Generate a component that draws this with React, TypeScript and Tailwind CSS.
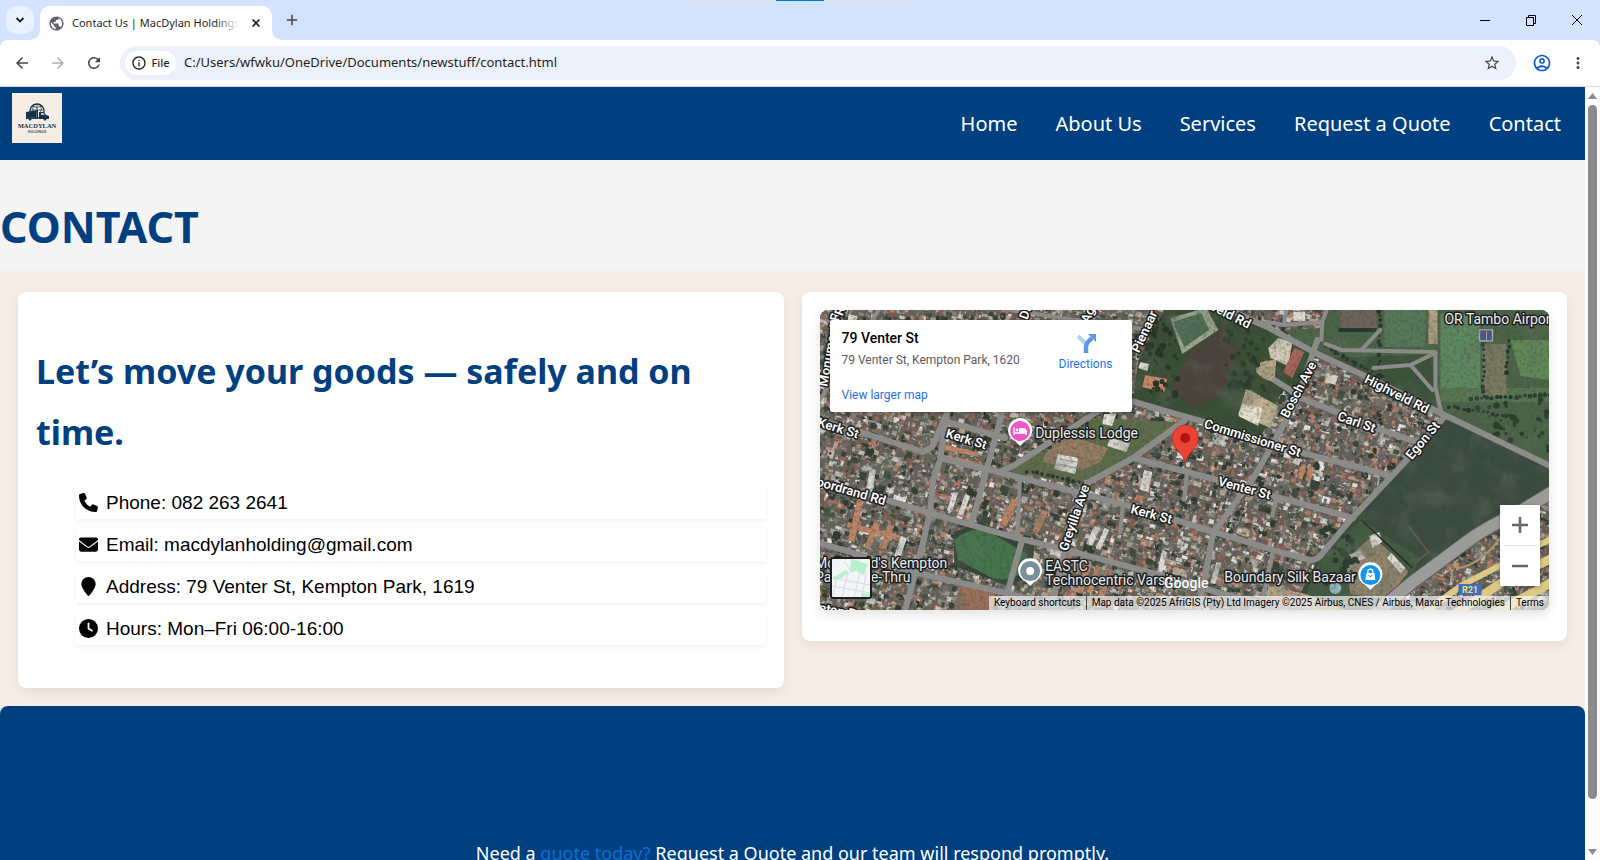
import type { ReactNode } from "react";
import { FaPhone, FaEnvelope, FaLocationPin, FaClock } from "react-icons/fa6";
import {
  MdArrowBack,
  MdArrowForward,
  MdRefresh,
  MdInfoOutline,
  MdStarBorder,
  MdOutlineAccountCircle,
  MdMoreVert,
  MdPublic,
  MdAdd,
  MdKeyboardArrowDown,
} from "react-icons/md";

const navLinks = ["Home", "About Us", "Services", "Request a Quote", "Contact"];

const contactRows: { icon: ReactNode; text: string }[] = [
  { icon: <FaPhone />, text: "Phone: 082 263 2641" },
  { icon: <FaEnvelope />, text: "Email: macdylanholding@gmail.com" },
  { icon: <FaLocationPin />, text: "Address: 79 Venter St, Kempton Park, 1619" },
  { icon: <FaClock />, text: "Hours: Mon–Fri 06:00-16:00" },
];

/* Seeded generator so that the aerial texture is the same on every load. */
function makeRandom(seed: number) {
  let s = seed;
  return () => {
    s = (s * 1664525 + 1013904223) % 4294967296;
    return s / 4294967296;
  };
}

const roofColors = [
  "#a06a5c", "#b87a64", "#8a5c52", "#c08f78", "#a5a29e", "#c9c5bf", "#e6e3de",
  "#8b857f", "#6b6660", "#454a44", "#323b32", "#3c4837", "#b5a692", "#7b7069",
];

function buildRoofs() {
  const rnd = makeRandom(77);
  const paths = roofColors.map(() => "");
  const a = (16 * Math.PI) / 180;
  const c = Math.cos(a);
  const s = Math.sin(a);
  for (let v = -220; v < 320; v += 5) {
    for (let u = -20; u < 840; u += 6) {
      const du = u + rnd() * 5;
      const dv = v + rnd() * 5;
      const x = du * c - dv * s;
      const y = du * s + dv * c;
      const big = rnd() > 0.88 ? 2 : 1;
      const w = (1.5 + rnd() * 5) * big;
      const h = 1.5 + rnd() * 4 * big;
      const k = Math.floor(rnd() * roofColors.length);
      if (x < -8 || x > 735 || y < -8 || y > 305) continue;
      paths[k] +=
        `M${x.toFixed(1)} ${y.toFixed(1)}l${(w * c).toFixed(1)} ${(w * s).toFixed(1)}` +
        `l${(-h * s).toFixed(1)} ${(h * c).toFixed(1)}l${(-w * c).toFixed(1)} ${(-w * s).toFixed(1)}z`;
    }
  }
  return paths;
}

function dot(x: number, y: number, r: number) {
  return `M${(x - r).toFixed(1)} ${y.toFixed(1)}a${r.toFixed(1)} ${r.toFixed(1)} 0 1 0 ${(2 * r).toFixed(1)} 0a${r.toFixed(1)} ${r.toFixed(1)} 0 1 0 ${(-2 * r).toFixed(1)} 0`;
}

/* Trees scattered in clumps over an area. */
function buildTrees(x0: number, y0: number, w: number, h: number, n: number, seed: number) {
  const rnd = makeRandom(seed);
  let d = "";
  for (let i = 0; i < n; i++) {
    const x = x0 + rnd() * w;
    const y = y0 + rnd() * h;
    d += dot(x, y, 1 + rnd() * 2.5);
    if (rnd() > 0.5) d += dot(x + rnd() * 5, y + rnd() * 4, 1 + rnd() * 2.5);
  }
  return d;
}

/* Evenly spaced trees along a line. */
function treeLine(x1: number, y1: number, x2: number, y2: number, seed: number) {
  const rnd = makeRandom(seed);
  const n = Math.round(Math.hypot(x2 - x1, y2 - y1) / 5);
  let d = "";
  for (let i = 0; i <= n; i++) {
    d += dot(x1 + ((x2 - x1) * i) / n + rnd() * 2, y1 + ((y2 - y1) * i) / n + rnd() * 2, 1.2 + rnd() * 1.3);
  }
  return d;
}

const roofPaths = buildRoofs();
const townTrees = buildTrees(0, 0, 729, 300, 480, 5);

const mainRoads = [
  "M300 88L313 92L377 110L483 143L567 165",
  "M404 -2L447 17L493 42L547 67L620 103L732 157",
  "M0 110L43 123L103 142L112 137L127 103",
  "M127 103L120 150L113 170L110 203L97 257L85 300",
  "M127 112L185 128",
  "M183 98L167 158L152 212",
  "M120 148L170 160L260 183L313 197L395 222L453 240L490 250Q498 250 503 242L530 210L580 157L623 108",
  "M0 172L67 190L110 203L197 228L247 240L333 263L400 283L460 302",
  "M0 233L47 247L97 263L187 283L250 302",
  "M202 230L187 283L182 300",
  "M183 160L193 156L275 103L300 90",
  "M365 110L313 148L267 173L257 207L245 240L230 300",
  "M313 148L367 162L397 170L457 187L533 208",
  "M497 30L477 90L435 165L393 223L378 300",
  "M454 70L470 80L481 88L556 118L596 132",
];

const sideRoads = [
  "M367 162L364 190",
  "M456 187L452 206",
  "M453 240L440 300",
  "M303 193L300 222",
  "M200 168L197 226",
  "M380 277L440 292L530 310",
  "M505 34L521 40L615 42L615 77L621 103",
  "M463 15L502 12L501 30M507 -2L502 12",
  "M553 58L590 55L615 43M590 55L612 80",
  "M541 40L560 20",
  "M467 -2L463 15L447 12",
  "M180 -2L240 8L330 20",
  "M60 -2L0 90",
];

const streetLabels: { t: string; x: number; y: number; r: number }[] = [
  { t: "Kerk St", x: 18, y: 119, r: 17 },
  { t: "Kerk St", x: 146, y: 130, r: 17 },
  { t: "oordrand Rd", x: 31, y: 182, r: 16 },
  { t: "Monument Rd", x: 11, y: 36, r: -80 },
  { t: "Pienaar", x: 325, y: 22, r: -65 },
  { t: "Highveld Rd", x: 398, y: 0, r: 27 },
  { t: "Highveld Rd", x: 576, y: 85, r: 27 },
  { t: "Bosch Ave", x: 479, y: 80, r: -62 },
  { t: "Carl St", x: 536, y: 113, r: 19 },
  { t: "Egon St", x: 603, y: 131, r: -50 },
  { t: "Commissioner St", x: 432, y: 129, r: 17 },
  { t: "Venter St", x: 424, y: 179, r: 15 },
  { t: "Kerk St", x: 331, y: 205, r: 15 },
  { t: "Greyilla Ave", x: 255, y: 208, r: -71 },
  { t: "Kempton Rd", x: 8, y: 300, r: 10 },
  { t: "Dann", x: 209, y: -5, r: -70 },
  { t: "Aga", x: 270, y: 2, r: -65 },
  { t: "Rd", x: 22, y: -2, r: -70 },
];

function SatelliteMap() {
  return (
    <svg
      viewBox="0 0 729 300"
      preserveAspectRatio="xMidYMid slice"
      className="block h-full w-full"
      role="img"
      aria-label="Satellite map of Kempton Park"
    >
      <defs>
        <filter id="grain" x="0" y="0" width="100%" height="100%">
          <feTurbulence type="fractalNoise" baseFrequency="0.3" numOctaves="3" seed="4" />
          <feColorMatrix values="0 0 0 0 0.05  0 0 0 0 0.07  0 0 0 0 0.05  2.2 0 0 0 -1" />
        </filter>
        <filter id="glint" x="0" y="0" width="100%" height="100%">
          <feTurbulence type="fractalNoise" baseFrequency="0.22" numOctaves="3" seed="21" />
          <feColorMatrix values="0 0 0 0 0.9  0 0 0 0 0.87  0 0 0 0 0.82  0 3.4 0 0 -1.95" />
        </filter>
        <filter id="patch" x="0" y="0" width="100%" height="100%">
          <feTurbulence type="fractalNoise" baseFrequency="0.04" numOctaves="3" seed="9" />
          <feColorMatrix values="0 0 0 0 0.12  0 0 0 0 0.16  0 0 0 0 0.12  0 3 0 0 -1.4" />
        </filter>
      </defs>

      <rect width="729" height="300" fill="#67615a" />
      {roofPaths.map((d, i) => (
        <path key={i} d={d} fill={roofColors[i]} />
      ))}
      <path d={townTrees} fill="#2e3930" />
      <rect width="729" height="300" filter="url(#glint)" opacity="0.75" />

      {/* open ground */}
      <path d="M313 88L318 50L345 -2H404L447 17L493 42L478 88L462 80L440 128L377 108Z" fill="#3a4d35" />
      <path d="M350 78L372 40L404 18L418 42L402 84L372 98Z" fill="#4c433c" />
      <path d="M350 8L386 -2L398 20L362 44Z" fill="#9aa48e" />
      <path d="M353 12L381 3L389 20L364 37Z" fill="#4c6f55" />
      <path d="M325 65L347 69L344 82L322 77Z" fill="#d08c69" />
      <path d="M320 52L329 54L327 61L318 58Z" fill="#d7d3cc" />
      <path d="M436 58Q438 50 456 50L454 72Q442 70 436 62Z" fill="#c0aa8b" />
      <path d="M448 38L458 28L472 32L468 56L450 48Z" fill="#d4c9b8" />
      <path d="M474 38L484 42L472 68L463 62Z" fill="#b0635a" />
      <path d="M426 78L458 96L450 118L418 104Z" fill="#c2b193" />
      <path d="M422 94L442 98L438 116L418 106Z" fill="#e6dfd0" />
      <path d="M507 -2H732V155L620 103L547 67L493 42L463 20L502 18Z" fill="#4b6447" />
      <path d="M505 48L615 44V98L560 70Z" fill="#3c523a" />
      <rect x="520" y="0" width="36" height="20" fill="#6f625a" />
      <path d="M518 18H556V22H518Z" fill="#28352a" />
      <rect x="564" y="0" width="41" height="37" fill="#56795a" />
      <rect x="608" y="0" width="9" height="34" fill="#c3ad8b" />
      <rect x="620" y="4" width="40" height="74" fill="#5d8860" />
      <rect x="620" y="78" width="109" height="14" fill="#567850" />
      <rect x="662" y="34" width="24" height="52" fill="#7a7860" />
      <path d="M690 30H729V70L700 66Z" fill="#618956" />
      <rect x="659" y="20" width="13" height="11" fill="#42548f" stroke="#b9b9c4" strokeWidth="1.5" />
      <path d="M666 20V31" stroke="#b9b9c4" strokeWidth="1" />
      <rect x="473" y="2" width="12" height="9" fill="#dedbd4" />
      <path d={treeLine(662, 34, 662, 86, 1)} fill="#24332a" />
      <path d={treeLine(688, 30, 684, 62, 2)} fill="#24332a" />
      <path d={treeLine(650, 88, 729, 84, 3)} fill="#24332a" />
      <path d={treeLine(628, 96, 690, 106, 4)} fill="#24332a" />
      <path d={treeLine(558, 0, 558, 64, 6)} fill="#24332a" />
      <path d={treeLine(505, 36, 560, 66, 8)} fill="#24332a" />
      <path d={buildTrees(650, 88, 79, 50, 30, 12)} fill="#2b3d2c" />
      <path d={buildTrees(326, 4, 30, 90, 30, 15)} fill="#263526" />
      <path d={buildTrees(404, 20, 40, 60, 30, 16)} fill="#2b3b2a" />

      <path d="M623 108L732 159V180L652 226L596 268L560 302H470L497 250L530 210L580 157Z" fill="#3b4c3f" />
      <path d="M541 210L600 248L575 300H480L500 248Z" fill="#435a40" />
      <path d="M525 250L552 226L578 250L588 262L566 290L530 284Z" fill="#93846f" />
      <path d="M549 226L559 222L562 232L552 238Z" fill="#d9d6d0" />
      <path d="M571 243L585 258L580 263L567 248Z" fill="#e4e1da" />
      <path d="M526 246L540 240L545 248L530 255Z" fill="#cfc9bf" />
      <path d="M515 272a6 6 0 1 0 .1 0" fill="#8fb9bd" />
      <path d="M541 210L592 258" stroke="#1e2822" strokeWidth="1.5" />
      <path d="M588 216L608 242L596 252" stroke="#6b5e4e" strokeWidth="1.5" fill="none" />
      <path d={buildTrees(502, 214, 36, 60, 34, 20)} fill="#2a3b2e" />

      <path d="M190 160L268 108L360 112L313 147L266 170L240 172Z" fill="#5e6c4a" />
      <path d="M222 152L236 122L288 138L280 152L262 160Z" fill="#957c62" />
      <path d="M238 144L258 148L255 164L234 159Z" fill="#e1deda" />
      <path d="M240 149L256 152M239 154L255 158" stroke="#aaa59f" strokeWidth="1" />
      <path d="M284 104L296 104L292 116L282 114Z" fill="#e5e2dd" />
      <path d="M290 128L310 133L306 142L287 136Z" fill="#d8d4cd" />
      <path d={treeLine(206, 160, 262, 172, 30)} fill="#27342a" />
      <path d={treeLine(216, 142, 266, 112, 31)} fill="#27342a" />

      <path d="M134 222L160 212L214 236L211 266L188 276L134 256Z" fill="#36453a" />
      <path d="M134 230Q150 216 166 220L207 244Q208 258 199 264Q190 272 172 268L138 250Z" fill="#45754c" />
      <path d="M140 270L176 280L172 300H134Z" fill="#9a705c" />
      <path d="M448 276L486 284L524 300H444Z" fill="#b8a28a" />

      {/* long shed roofs */}
      <g fill="#c28766">
        <path d="M40 178L46 180L34 232L28 230ZM54 212L60 214L50 240L44 238ZM68 214L74 216L66 240L60 238ZM192 188L199 190L186 216L180 213ZM222 200L228 202L218 224L212 221Z" />
        <path d="M122 134L158 142V147L121 139ZM121 144L157 152V157L120 149ZM28 212L82 226L81 231L27 218ZM266 252L272 254L262 284L256 282ZM276 255L281 257L272 284L267 282ZM286 258L292 260L284 288L278 286Z" />
        <path d="M481 154L486 156L482 170L477 168ZM489 156L494 158L490 172L485 170Z" />
      </g>
      <path d="M133 182L138 183L132 202L127 200ZM145 184L150 186L143 206L138 204ZM50 158L56 160L52 182L46 180ZM274 216L280 218L272 236L266 234ZM284 218L289 220L280 240L276 238ZM342 240L347 242L340 272L335 270ZM81 226L87 228L80 248L74 246ZM396 252L401 253L395 274L390 273ZM324 160L332 162L328 182L320 180Z" fill="#dedbd6" />

      <rect width="729" height="300" filter="url(#patch)" opacity="0.4" />
      <rect width="729" height="300" filter="url(#grain)" opacity="0.5" />

      {/* roads */}
      <g fill="none" stroke="#8b8b89" strokeLinejoin="round" strokeLinecap="round">
        {mainRoads.map((d) => (
          <path key={d} d={d} strokeWidth="6" />
        ))}
        {sideRoads.map((d) => (
          <path key={d} d={d} strokeWidth="4" />
        ))}
        <path d="M552 306L592 272L650 229Q672 214 692 206L732 182" strokeWidth="14" stroke="#5d5f5c" />
        <path d="M552 306L592 272L650 229Q672 214 692 206L732 182" strokeWidth="12" stroke="#9b9b99" />
        <path d="M637 250Q630 256 638 258Q660 254 680 228" strokeWidth="2" stroke="#a99a66" />
      </g>
      <g fill="none" stroke="#dcc985">
        <path d="M596 308L640 276L732 228" strokeWidth="6" />
        <path d="M625 310L682 272L732 248" strokeWidth="9" />
        <path d="M665 308L732 272" strokeWidth="9" />
      </g>

      <g
        fontFamily="Roboto, sans-serif"
        fill="#ffffff"
        stroke="#1d1f20"
        strokeLinejoin="round"
        style={{ paintOrder: "stroke" }}
        textAnchor="middle"
      >
        {streetLabels.map((l, i) => (
          <text
            key={i}
            fontSize="13"
            fontWeight="600"
            strokeWidth="3"
            dominantBaseline="middle"
            transform={`translate(${l.x} ${l.y}) rotate(${l.r})`}
          >
            {l.t}
          </text>
        ))}
        <g fontSize="14" strokeWidth="3" fill="#e9eaea" textAnchor="start">
          <text x="215" y="128">Duplessis Lodge</text>
          <text x="624" y="14">OR Tambo Airport</text>
          <text x="225" y="261">EASTC</text>
          <text x="225" y="275">Technocentric Varsity</text>
          <text x="404" y="272">Boundary Silk Bazaar</text>
          <text x="-5" y="258">McDonald's Kempton</text>
          <text x="-5" y="272">Park Drive-Thru</text>
        </g>
        <text x="366" y="278" fontSize="14" fontWeight="500" strokeWidth="1" stroke="#6a6a6a">
          Google
        </text>
      </g>

      {/* place markers */}
      <g transform="translate(200 121)">
        <path d="M0 15L-5 10A12 12 0 1 1 5 10Z" fill="#fff" />
        <circle r="10" fill="#f553c8" />
        <path d="M-6 -4V4M-6 2H6V4M6 3V-1" stroke="#fff" strokeWidth="1.5" fill="none" />
        <circle cx="-3" cy="-1" r="1.5" fill="#fff" />
        <path d="M-1 -3H4Q6 -3 6 -1V2H-1Z" fill="#fff" />
      </g>
      <g transform="translate(210 261)">
        <path d="M0 15L-5 10A12 12 0 1 1 5 10Z" fill="#fff" />
        <circle r="10" fill="#78909c" />
        <circle r="4" fill="#fff" />
      </g>
      <g transform="translate(550 265)">
        <path d="M0 15L-5 10A12 12 0 1 1 5 10Z" fill="#fff" />
        <circle r="10" fill="#0d96f6" />
        <path d="M-4 -2H4L5 5H-5Z" fill="#fff" />
        <path d="M-2.500 -2V-3.500A2.500 2.500 0 0 1 2.500 -3.500V-2" stroke="#fff" strokeWidth="1.300" fill="none" />
        <path d="M-2 0Q0 3 2 0" stroke="#0d96f6" strokeWidth="1" fill="none" />
      </g>
      <g transform="translate(365 128)">
        <path d="M0 25C-2 14 -13 11 -13 0A13 13 0 1 1 13 0C13 11 2 14 0 25Z" fill="#ea4335" stroke="#c5221f" strokeWidth="0.700" />
        <circle r="5" fill="#b31412" />
      </g>
      <g transform="translate(638 274)">
        <rect width="23" height="11" fill="#3b6fc0" />
        <text x="11.500" y="9" fontFamily="Roboto, sans-serif" fontSize="9" fontWeight="700" fill="#f4dc6a" textAnchor="middle">
          R21
        </text>
      </g>
    </svg>
  );
}

function MapEmbed() {
  return (
    <div className="relative h-[300px] overflow-hidden rounded-lg font-['Roboto',sans-serif] shadow-[0_4px_12px_rgba(0,0,0,0.12)]">
      <SatelliteMap />

      <div className="absolute left-[10px] top-[10px] flex w-[302px] justify-between rounded-[2px] bg-white pb-[9px] pl-3 pr-[19px] pt-[10px] shadow-[0_1px_4px_rgba(0,0,0,0.3)]">
        <div className="flex flex-col">
          <p className="text-sm leading-4 font-medium text-black">79 Venter St</p>
          <p className="mt-[6px] text-xs leading-4 text-[#5b5b5b]">79 Venter St, Kempton Park, 1620</p>
          <a href="#map" className="mt-[19px] text-xs leading-4 text-[#1a73e8]">View larger map</a>
        </div>
        <a href="#directions" className="flex flex-col items-center gap-[2px] pt-[2px] text-xs leading-4 text-[#1a73e8]">
          <svg viewBox="0 0 22 22" className="h-[22px] w-[22px]" aria-hidden="true">
            <path d="M3 4L11 12" stroke="#b5d0f7" strokeWidth="4" fill="none" />
            <path d="M11 21V15Q11 12 13 10L17 6" stroke="#5e97e8" strokeWidth="4.500" fill="none" />
            <path d="M13 2H21V10Z" fill="#5e97e8" />
          </svg>
          Directions
        </a>
      </div>

      <button
        aria-label="Show street map"
        className="absolute left-[10px] top-[247px] h-[42px] w-[42px] overflow-hidden rounded-[3px] border-2 border-[#1f1f1f]"
      >
        <svg viewBox="0 0 38 38" className="block h-full w-full" aria-hidden="true">
          <rect width="38" height="38" fill="#f3f4f5" />
          <path d="M19 0L36 5L32 16L25 12L18 13Z" fill="#b9efcd" />
          <path d="M0 19L14 11L17 14L4 22Z" fill="#b9efcd" />
          <path d="M28 34L38 35V38H30Z" fill="#b9efcd" />
          <path d="M0 27L38 34M4 22L1 38M16 14L10 38M28 14L22 38M12 2L20 14M6 20L38 26M34 14L30 38" stroke="#d3dbe5" strokeWidth="1" fill="none" />
        </svg>
      </button>

      <div className="absolute bottom-[24px] right-[9px] flex w-[40px] flex-col items-center bg-white shadow-[0_1px_4px_rgba(0,0,0,0.3)]">
        <button aria-label="Zoom in" className="flex h-10 w-full items-center justify-center">
          <svg viewBox="0 0 18 18" className="h-[18px] w-[18px]" aria-hidden="true">
            <path d="M9 1V17M1 9H17" stroke="#666" strokeWidth="2.500" />
          </svg>
        </button>
        <span className="h-px w-[30px] bg-[#e0e0e0]" />
        <button aria-label="Zoom out" className="flex h-10 w-full items-center justify-center">
          <svg viewBox="0 0 18 18" className="h-[18px] w-[18px]" aria-hidden="true">
            <path d="M1 9H17" stroke="#666" strokeWidth="2.500" />
          </svg>
        </button>
      </div>

      <div className="absolute bottom-0 right-0 flex h-[14px] items-center bg-[#f5f5f5]/70 text-[10px] leading-[14px] whitespace-nowrap text-black">
        <button className="px-[5px]">Keyboard shortcuts</button>
        <span className="border-l border-[#444] px-[5px]">
          Map data ©2025 AfriGIS (Pty) Ltd Imagery ©2025 Airbus, CNES / Airbus, Maxar Technologies
        </span>
        <a href="#terms" className="border-l border-[#444] px-[5px]">Terms</a>
      </div>
    </div>
  );
}

function Logo() {
  return (
    <svg viewBox="0 0 50 50" className="block h-[50px] w-[50px]" role="img" aria-label="MacDylan Holdings">
      <rect width="50" height="50" fill="#f5ede3" />
      <circle cx="25" cy="18" r="7" fill="none" stroke="#12324c" strokeWidth="1.300" />
      <path d="M25 11V20M18 17H32M20 13Q25 16 30 13M22 12Q19 16 22 20M28 12Q31 16 28 20" stroke="#12324c" strokeWidth="0.700" fill="none" />
      <path d="M14 19L26 17V26H14Z" fill="#12324c" />
      <path d="M27 19H32L34 22L37 23V26H27Z" fill="#12324c" />
      <path d="M29 20H31.500L33 22H29Z" fill="#b9c3c8" />
      <path d="M24.500 18V24M15 25H25" stroke="#6d8290" strokeWidth="0.600" />
      <circle cx="18" cy="26" r="1.500" fill="#12324c" />
      <circle cx="33" cy="26" r="1.500" fill="#12324c" />
      <text x="25" y="35" fontFamily="'Liberation Serif', serif" fontSize="6.500" fontWeight="700" fill="#12324c" textAnchor="middle">
        MACDYLAN
      </text>
      <text x="25" y="39.500" fontFamily="'Liberation Sans', sans-serif" fontSize="3.500" fontWeight="700" fill="#3b5568" textAnchor="middle">
        HOLDINGS
      </text>
    </svg>
  );
}

function TabStrip() {
  return (
    <div className="relative flex h-10 shrink-0 items-end bg-[#d3e2fd]">
      <div className="absolute inset-x-0 top-0 flex justify-center">
        <span className="h-px w-24 bg-[#e3e3e3]" />
        <span className="h-px w-12 bg-[#0078d7]" />
        <span className="h-px w-24 bg-[#e3e3e3]" />
      </div>
      <button aria-label="Search tabs" className="mb-[6px] ml-[6px] flex h-7 w-7 items-center justify-center rounded-[10px] bg-[#e9f0fe] text-[#1f1f1f]">
        <svg viewBox="0 0 10 10" className="h-[10px] w-[10px]" aria-hidden="true">
          <path d="M1.500 3L5 6.500L8.500 3" stroke="currentColor" strokeWidth="1.800" fill="none" />
        </svg>
      </button>
      <div className="relative ml-[6px] flex h-[34px] w-[232px] items-center rounded-t-[10px] bg-white px-2 py-[6px]">
        <svg viewBox="0 0 10 10" className="absolute -left-[10px] bottom-0 h-[10px] w-[10px]" aria-hidden="true">
          <path d="M10 0A10 10 0 0 1 0 10H10Z" fill="#fff" />
        </svg>
        <svg viewBox="0 0 10 10" className="absolute -right-[10px] bottom-0 h-[10px] w-[10px]" aria-hidden="true">
          <path d="M0 0A10 10 0 0 0 10 10H0Z" fill="#fff" />
        </svg>
        <MdPublic className="h-[17px] w-[17px] shrink-0 text-[#5f6368]" />
        <div className="relative ml-[7px] min-w-0 flex-1 overflow-hidden">
          <p className="text-[11px] leading-4 whitespace-nowrap text-[#1f1f1f]">Contact Us | MacDylan Holdings</p>
          <span className="absolute inset-y-0 right-0 w-6 bg-linear-to-r from-white/0 to-white" />
        </div>
        <button aria-label="Close tab" className="mr-[3px] ml-[12px] text-[#1f1f1f]">
          <svg viewBox="0 0 10 10" className="h-[10px] w-[10px]" aria-hidden="true">
            <path d="M1.500 1.500L8.500 8.500M8.500 1.500L1.500 8.500" stroke="currentColor" strokeWidth="1.700" />
          </svg>
        </button>
      </div>
      <button aria-label="New tab" className="mb-[11px] ml-[11px] text-[#444746]">
        <MdAdd className="h-[18px] w-[18px]" />
      </button>
      <div className="mb-[14px] ml-auto flex items-center gap-[34px] pr-[17px]">
        <button aria-label="Minimize">
          <svg viewBox="0 0 12 12" className="h-3 w-3" aria-hidden="true"><path d="M1 6.500H11" stroke="#000" /></svg>
        </button>
        <button aria-label="Restore">
          <svg viewBox="0 0 12 12" className="h-3 w-3" aria-hidden="true">
            <path d="M1.500 3.500H8.500V11.500H1.500ZM3.500 3V1.500H10.500V9.500H9" stroke="#000" fill="none" />
          </svg>
        </button>
        <button aria-label="Close window">
          <svg viewBox="0 0 12 12" className="h-3 w-3" aria-hidden="true"><path d="M1 1L11 11M11 1L1 11" stroke="#000" /></svg>
        </button>
      </div>
    </div>
  );
}

function Toolbar() {
  return (
    <div className="shrink-0 bg-[#d3e2fd]">
      <div className="flex h-[47px] items-center rounded-t-lg border-b border-[#dadce0] bg-white pr-[13px] pl-[13px]">
        <button aria-label="Back" className="text-[#474747]"><MdArrowBack className="h-[18px] w-[18px]" /></button>
        <button aria-label="Forward" className="ml-[18px] text-[#b0b0b0]"><MdArrowForward className="h-[18px] w-[18px]" /></button>
        <button aria-label="Reload" className="ml-[18px] text-[#474747]"><MdRefresh className="h-[18px] w-[18px]" /></button>
        <div className="ml-[17px] flex h-[34px] min-w-0 flex-1 items-center rounded-full bg-[#ebf0fa] pr-[15px] pl-[5px]">
          <button className="flex h-6 w-[51px] items-center justify-center gap-1 rounded-full bg-white text-[11px] font-medium text-[#1f1f1f]">
            <MdInfoOutline className="h-[16px] w-[16px]" />
            File
          </button>
          <input
            aria-label="Address"
            defaultValue="C:/Users/wfwku/OneDrive/Documents/newstuff/contact.html"
            className="ml-2 min-w-0 flex-1 bg-transparent text-[13px] text-[#1f1f1f] outline-none"
          />
          <button aria-label="Bookmark" className="text-[#474747]"><MdStarBorder className="h-[18px] w-[18px]" /></button>
        </div>
        <button aria-label="Profile" className="ml-[16px] text-[#0b57d0]"><MdOutlineAccountCircle className="h-[20px] w-[20px]" /></button>
        <button aria-label="Menu" className="ml-[17px] text-[#474747]"><MdMoreVert className="h-[18px] w-[18px]" /></button>
      </div>
    </div>
  );
}

export default function App() {
  return (
    <div className="flex h-screen flex-col overflow-hidden font-['Noto_Sans',sans-serif]">
      <TabStrip />
      <Toolbar />
      <div className="flex min-h-0 flex-1">
        <div className="min-w-0 flex-1 overflow-hidden bg-[#f4f4f4]">
          <header className="flex h-[73px] items-start justify-between bg-[#004080] pt-[6px] pr-6 pl-3">
            <Logo />
            <nav className="flex gap-[38px] pt-[15px] text-[20px] leading-8 text-white">
              {navLinks.map((label) => (
                <a key={label} href="#top">{label}</a>
              ))}
            </nav>
          </header>

          <h1 className="pt-[31px] pb-[10px] text-[43px] leading-[72px] font-bold text-[#004080]">CONTACT</h1>

          <main className="grid grid-cols-2 items-start gap-[18px] bg-[#f7ede4] px-[18px] pt-[19px] pb-[18px] shadow-[0_4px_12px_rgba(0,0,0,0.08)]">
            <section className="rounded-lg bg-white px-[18px] pt-[49px] pb-[43px] shadow-[0_4px_12px_rgba(0,0,0,0.08)]">
              <h2 className="text-[34px] leading-[61px] font-bold text-[#004080]">
                Let’s move your goods — safely and on time.
              </h2>
              <ul className="mt-[23px] flex flex-col gap-[9px] pl-10 font-['Liberation_Sans',sans-serif] text-[19px] leading-[30px] text-black">
                {contactRows.map((row) => (
                  <li key={row.text} className="flex h-[33px] items-center gap-2 px-[2px] shadow-[0_2px_5px_rgba(0,0,0,0.06)]">
                    <span className="flex w-5 justify-center text-[19px]">{row.icon}</span>
                    <span>{row.text}</span>
                  </li>
                ))}
              </ul>
            </section>
            <section className="rounded-lg bg-white px-[18px] pt-[18px] pb-[31px] shadow-[0_4px_12px_rgba(0,0,0,0.08)]">
              <MapEmbed />
            </section>
          </main>

          <footer className="rounded-lg bg-[#004080] px-6 py-[132px] text-center text-[18px] leading-[31px] text-white">
            <p>
              Need a <a href="#quote" className="text-[#0d6fd0]">quote today?</a> Request a Quote and our team will respond promptly.
            </p>
          </footer>
        </div>

        <div className="flex w-[15px] shrink-0 flex-col items-center bg-[#fcfcfc] pt-[6px] pb-[5px]">
          <svg viewBox="0 0 9 6" className="h-[6px] w-[9px]" aria-hidden="true"><path d="M0 6L4.500 0L9 6Z" fill="#8b8b8b" /></svg>
          <div className="mt-[6px] mb-[50px] w-[9px] flex-1 rounded-full bg-[#8b8b8b]" />
          <svg viewBox="0 0 9 6" className="h-[6px] w-[9px]" aria-hidden="true"><path d="M0 0L4.500 6L9 0Z" fill="#8b8b8b" /></svg>
        </div>
      </div>
    </div>
  );
}
